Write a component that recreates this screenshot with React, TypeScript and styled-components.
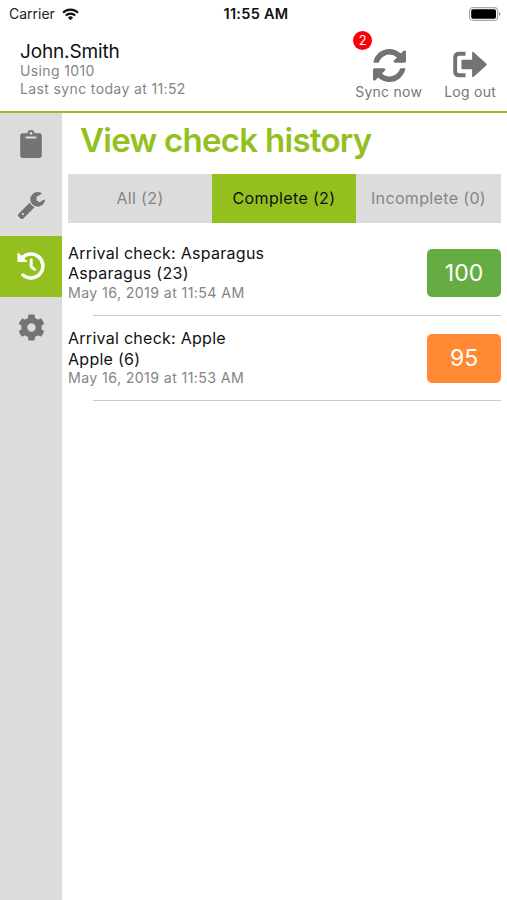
import React from "react";
import styled, { createGlobalStyle } from "styled-components";
import { FaCog } from "react-icons/fa";

const GlobalStyle = createGlobalStyle`
  *, *::before, *::after { box-sizing: border-box; }
  body { margin: 0; background: #fff; }
  button { font: inherit; border: 0; padding: 0; background: none; letter-spacing: inherit; }
`;

const Screen = styled.div`
  width: 507px;
  height: 900px;
  display: flex;
  flex-direction: column;
  background: #fff;
  color: #111;
  font-family: Inter, "Liberation Sans", sans-serif;
  white-space: nowrap;
  overflow: hidden;
`;

const StatusBar = styled.div`
  height: 28px;
  display: grid;
  grid-template-columns: 1fr auto 1fr;
  align-items: center;
  padding: 0 6px 0 9px;
  font-size: 14px;
  line-height: 28px;
`;

const Carrier = styled.div`
  display: flex;
  align-items: center;
  gap: 7px;
  color: #222;
`;

const Clock = styled.div`
  padding-left: 2px;
  font-weight: 600;
  font-size: 14.5px;
  letter-spacing: 0.28px;
`;

const BatterySlot = styled.div`
  display: flex;
  justify-content: flex-end;
`;

const Header = styled.header`
  height: 85px;
  display: flex;
  justify-content: space-between;
  padding: 12px 11px 0 20px;
  border-bottom: 2px solid #97bf2c;
`;

const UserName = styled.div`
  padding-top: 1px;
  font-size: 19px;
  line-height: 21px;
  letter-spacing: -0.15px;
`;

const UserMeta = styled.div`
  font-size: 14px;
  line-height: 17.5px;
  color: #858585;
  letter-spacing: 0.37px;
`;

const Actions = styled.div`
  display: flex;
  gap: 22px;
`;

const Action = styled.button`
  position: relative;
  display: flex;
  flex-direction: column;
  align-items: center;
  color: #737373;
`;

const ActionIcon = styled.span`
  height: 42px;
  display: flex;
  align-items: center;
  padding-top: 7px;
`;

const SyncIconSlot = styled(ActionIcon)`
  padding: 8px 0 0 2px;
`;

const ActionLabel = styled.span`
  font-size: 14px;
  line-height: 19px;
  letter-spacing: 0.25px;
  color: #777;
`;

const CountBadge = styled.span`
  position: absolute;
  top: -9px;
  left: -2px;
  width: 19px;
  height: 19px;
  border-radius: 50%;
  background: #fb0007;
  color: #fff;
  font-size: 13px;
  line-height: 19px;
  text-align: center;
`;

const Body = styled.div`
  flex: 1;
  display: flex;
`;

const Sidebar = styled.nav`
  width: 62px;
  background: #dcdcdc;
  display: flex;
  flex-direction: column;
`;

const NavItem = styled.button<{ $active?: boolean }>`
  height: 61px;
  display: flex;
  align-items: center;
  justify-content: center;
  color: ${(p) => (p.$active ? "#fff" : "#737373")};
  background: ${(p) => (p.$active ? "#93c01f" : "transparent")};
`;

const NavList = styled.div`
  padding-top: 0.5px;
  display: flex;
  flex-direction: column;
`;

const Content = styled.main`
  flex: 1;
  padding: 0 6px;
`;

const Title = styled.h1`
  margin: 0;
  height: 61px;
  padding: 6px 0 0 12px;
  font-size: 33px;
  line-height: 43px;
  font-weight: 600;
  letter-spacing: -0.72px;
  color: #93c01f;
`;

const Tabs = styled.div`
  display: grid;
  grid-template-columns: 144px 144px 145px;
  height: 49px;
`;

const Tab = styled.button<{ $active?: boolean }>`
  padding-bottom: 2px;
  font-size: 16px;
  letter-spacing: 0.35px;
  color: ${(p) => (p.$active ? "#111" : "#858585")};
  background: ${(p) => (p.$active ? "#93c01f" : "#dcdcdc")};
`;

const List = styled.div`
  padding-top: 7px;
`;

const Row = styled.article`
  position: relative;
  height: 85.5px;
  padding-top: 12.5px;
  display: flex;
  justify-content: space-between;
  &::after {
    content: "";
    position: absolute;
    left: 25px;
    right: 0;
    bottom: 0;
    height: 1px;
    background: #cbcbcb;
  }
`;

const RowLine = styled.div`
  font-size: 16px;
  line-height: 20.5px;
  letter-spacing: 0.27px;
`;

const RowDate = styled.div`
  font-size: 14.2px;
  line-height: 18.5px;
  letter-spacing: 0.38px;
  color: #858585;
`;

const Score = styled.div<{ $color: string }>`
  width: 74px;
  height: 48.5px;
  margin-top: 6px;
  border-radius: 5px;
  background: ${(p) => p.$color};
  color: #fff;
  font-size: 23px;
  font-weight: 400;
  line-height: 48px;
  text-align: center;
`;

const WifiIcon = () => (
  <svg width="17" height="13" viewBox="0 0 17 13" fill="none" stroke="#111" strokeWidth="2.2">
    <path d="M1 4.7a10.8 10.8 0 0 1 15 0" />
    <path d="M3.8 7.5a6.8 6.8 0 0 1 9.4 0" />
    <path d="M8.500 12.300 5.900 9.600a3.700 3.700 0 0 1 5.200 0z" fill="#111" stroke="none" />
  </svg>
);

const BatteryIcon = () => (
  <svg width="32" height="14" viewBox="0 0 32 14">
    <rect x="0.6" y="0.6" width="28" height="12.8" rx="3.2" fill="#fff" stroke="#a8a8a8" strokeWidth="1.1" />
    <rect x="2.2" y="2.2" width="24.8" height="9.6" rx="1.8" fill="#000" />
    <path d="M30 5v4q1.4-.6 1.4-2T30 5z" fill="#999" />
  </svg>
);

const SyncIcon = () => (
  <svg width="33" height="33" viewBox="0 128 1536 1536" fill="currentColor">
    <path d="M1511 1056q0 5-1 7-64 268-268 434.500t-478 166.500q-146 0-282.500-55t-243.500-157l-129 129q-19 19-45 19t-45-19-19-45v-448q0-26 19-45t45-19h448q26 0 45 19t19 45-19 45l-137 137q71 66 161 102t187 36q134 0 250-65t186-179q11-17 53-117 8-23 30-23h192q13 0 22.500 9.500t9.500 22.500zm25-800v448q0 26-19 45t-45 19h-448q-26 0-45-19t-19-45 19-45l138-138q-148-137-349-137-134 0-250 65t-186 179q-11 17-53 117-8 23-30 23h-199q-13 0-22.500-9.500t-9.500-22.500v-7q65-268 270-434.500t480-166.500q146 0 284 55.500t245 156.500l130-129q19-19 45-19t45 19 19 45z" />
  </svg>
);

const LogOutIcon = () => (
  <svg width="34" height="27" viewBox="0 0 34 27">
    <path d="M12.500 2.700H6.200Q2.200 2.700 2.200 6.500v14Q2.200 24.300 6.200 24.300h6.300" fill="none" stroke="currentColor" strokeWidth="3.900" />
    <path d="M9.700 8.700h9.400V2.200q0-2.200 1.900-.8l12.200 11.100q1 1 0 2L21 25.600q-1.900 1.400-1.900-.8v-6.500H9.700q-1.300 0-1.300-1.300v-7q0-1.300 1.300-1.300z" fill="currentColor" />
  </svg>
);

const ClipboardIcon = () => (
  <svg width="22" height="28" viewBox="0 0 22 28">
    <path
      fill="currentColor"
      fillRule="evenodd"
      d="M2.500 3.200H7.400Q7.900 0 11 0t3.600 3.200h4.900Q21.800 3.200 21.800 5.500v20.100q0 2.300-2.300 2.300h-17Q.2 27.900.2 25.600V5.500Q.2 3.200 2.500 3.200zM11 1.900a1.400 1.400 0 1 0 0 2.800 1.400 1.400 0 0 0 0-2.800zM5.600 6.600v1.900h10.800V6.600z"
    />
  </svg>
);

const WrenchIcon = () => (
  <svg width="27" height="27" viewBox="85 128 1643 1643" fill="currentColor">
    <path d="M448 1472q0-26-19-45t-45-19-45 19-19 45 19 45 45 19 45-19 19-45zm644-420l-682 682q-37 37-90 37-52 0-91-37l-106-108q-38-36-38-90 0-53 38-91l681-681q39 98 114.500 173.500t173.500 114.500zm634-435q0 39-23 106-47 134-164.500 217.500t-258.500 83.500q-185 0-316.500-131.500t-131.500-316.500 131.500-316.500 316.500-131.500q58 0 121.500 16.500t107.500 46.500q16 11 16 28t-16 28l-293 169v224l193 107q5-3 79-48.500t135.500-81 70.500-35.500q15 0 23.500 10t8.500 25z" />
  </svg>
);

const HistoryIcon = () => (
  <svg width="28" height="28" viewBox="0 0 28 28" fill="none" stroke="currentColor">
    <path d="M4.800 6.200A12 12 0 1 1 6 23" strokeWidth="3.500" strokeLinecap="round" />
    <path d="M1 1.300v8h8.500z" fill="currentColor" strokeWidth="1.200" strokeLinejoin="round" />
    <path d="M14.200 8v6.700l3.300 2.700" strokeWidth="2.900" strokeLinecap="round" strokeLinejoin="round" />
  </svg>
);

const checks = [
  { title: "Arrival check: Asparagus", item: "Asparagus (23)", date: "May 16, 2019 at 11:54 AM", score: 100, color: "#65ad43" },
  { title: "Arrival check: Apple", item: "Apple (6)", date: "May 16, 2019 at 11:53 AM", score: 95, color: "#ff8a33" },
];

export default function App() {
  return (
    <Screen>
      <GlobalStyle />
      <StatusBar>
        <Carrier>
          Carrier <WifiIcon />
        </Carrier>
        <Clock>11:55 AM</Clock>
        <BatterySlot>
          <BatteryIcon />
        </BatterySlot>
      </StatusBar>
      <Header>
        <div>
          <UserName>John.Smith</UserName>
          <UserMeta>Using 1010</UserMeta>
          <UserMeta>Last sync today at 11:52</UserMeta>
        </div>
        <Actions>
          <Action>
            <CountBadge>2</CountBadge>
            <SyncIconSlot>
              <SyncIcon />
            </SyncIconSlot>
            <ActionLabel>Sync now</ActionLabel>
          </Action>
          <Action>
            <ActionIcon>
              <LogOutIcon />
            </ActionIcon>
            <ActionLabel>Log out</ActionLabel>
          </Action>
        </Actions>
      </Header>
      <Body>
        <Sidebar>
          <NavList>
            <NavItem aria-label="Checks">
              <ClipboardIcon />
            </NavItem>
            <NavItem aria-label="Tools">
              <WrenchIcon />
            </NavItem>
            <NavItem aria-label="History" $active>
              <HistoryIcon />
            </NavItem>
            <NavItem aria-label="Settings">
              <FaCog size={27} />
            </NavItem>
          </NavList>
        </Sidebar>
        <Content>
          <Title>View check history</Title>
          <Tabs>
            <Tab>All (2)</Tab>
            <Tab $active>Complete (2)</Tab>
            <Tab>Incomplete (0)</Tab>
          </Tabs>
          <List>
            {checks.map((check) => (
              <Row key={check.title}>
                <div>
                  <RowLine>{check.title}</RowLine>
                  <RowLine>{check.item}</RowLine>
                  <RowDate>{check.date}</RowDate>
                </div>
                <Score $color={check.color}>{check.score}</Score>
              </Row>
            ))}
          </List>
        </Content>
      </Body>
    </Screen>
  );
}
